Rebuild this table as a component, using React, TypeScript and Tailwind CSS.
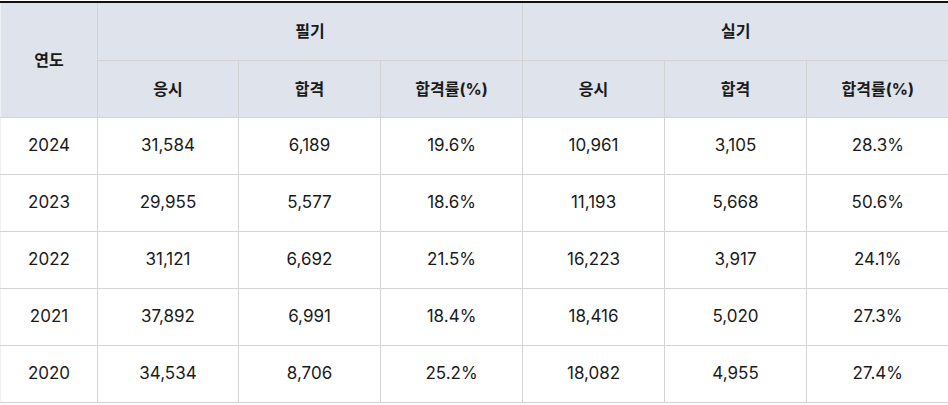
import React from "react";

const rows = [
  ["2024", "31,584", "6,189", "19.6%", "10,961", "3,105", "28.3%"],
  ["2023", "29,955", "5,577", "18.6%", "11,193", "5,668", "50.6%"],
  ["2022", "31,121", "6,692", "21.5%", "16,223", "3,917", "24.1%"],
  ["2021", "37,892", "6,991", "18.4%", "18,416", "5,020", "27.3%"],
  ["2020", "34,534", "8,706", "25.2%", "18,082", "4,955", "27.4%"],
];

export default function App() {
  const th = "border border-[#d3d3d3] bg-[#dfe3eb] font-bold text-[16px] text-[#1a1a1a] text-center align-middle";
  const td = "border border-[#d3d3d3] text-[17px] text-[#1a1a1a] text-center align-middle h-[57px]";
  return (
    <div className="w-[948px] h-[405px] bg-white pt-px overflow-hidden" style={{ fontFamily: "Inter, 'Noto Sans CJK KR', sans-serif" }}>
      <table className="table-fixed border-collapse w-[948px] border-t-2 border-t-[#111] border-l border-l-[#eef0f4]">
        <colgroup>
          <col className="w-[97px]" />
          <col className="w-[141px]" />
          <col className="w-[142px]" />
          <col className="w-[142px]" />
          <col className="w-[142px]" />
          <col className="w-[142px]" />
          <col className="w-[142px]" />
        </colgroup>
        <thead>
          <tr className="h-[58px]">
            <th rowSpan={2} className={th + " border-t-2 border-t-[#111] border-l-0"}>연도</th>
            <th colSpan={3} className={th + " border-t-2 border-t-[#111]"}>필기</th>
            <th colSpan={3} className={th + " border-t-2 border-t-[#111] border-r-0"}>실기</th>
          </tr>
          <tr className="h-[57px]">
            <th className={th}>응시</th>
            <th className={th}>합격</th>
            <th className={th}>합격률(%)</th>
            <th className={th}>응시</th>
            <th className={th}>합격</th>
            <th className={th + " border-r-0"}>합격률(%)</th>
          </tr>
        </thead>
        <tbody>
          {rows.map((r) => (
            <tr key={r[0]}>
              {r.map((c, i) => (
                <td key={i} className={td + (i === 0 ? " border-l-0" : "") + (i === 6 ? " border-r-0" : "")}>
                  {c}
                </td>
              ))}
            </tr>
          ))}
        </tbody>
      </table>
    </div>
  );
}
